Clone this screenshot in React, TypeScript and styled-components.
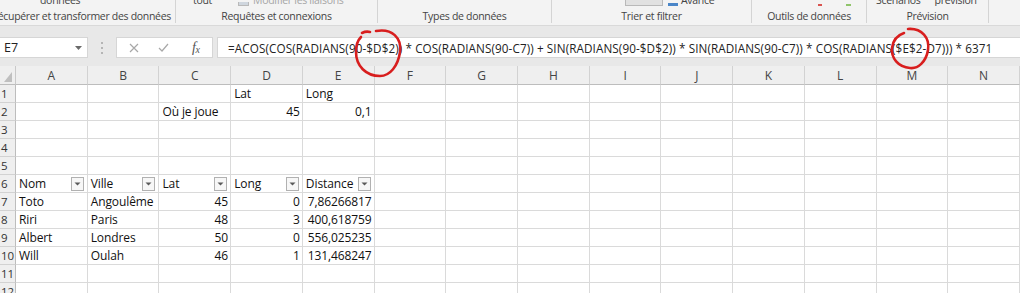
import React from 'react';
import styled, { createGlobalStyle } from 'styled-components';

const UI_FONT = `"Open Sans", "Noto Sans", "Liberation Sans", sans-serif`;

const GlobalStyle = createGlobalStyle`
  html, body { margin: 0; padding: 0; background: #ffffff; }
  body { width: 1020px; height: 293px; overflow: hidden; }
  #root { width: 1020px; height: 293px; }
`;

const Page = styled.div`
  position: relative;
  width: 1020px;
  height: 293px;
  overflow: hidden;
  display: flex;
  flex-direction: column;
  font-family: ${UI_FONT};
  background: #ffffff;
`;

/* ---------- Ribbon ---------- */
const Ribbon = styled.div`
  flex: none;
  height: 26px;
  box-sizing: border-box;
  padding-bottom: 2px;
  display: flex;
  background: #f3f3f3;
  border-bottom: 1px solid #d9d9d9;
`;

const Group = styled.div<{ $w?: number; $last?: boolean }>`
  flex: ${(p) => (p.$w ? 'none' : '1')};
  width: ${(p) => (p.$w ? `${p.$w}px` : 'auto')};
  box-sizing: border-box;
  border-right: ${(p) => (p.$last ? 'none' : '1px solid #d4d4d4')};
  display: flex;
  flex-direction: column;
  overflow: hidden;
`;

const TopRow = styled.div<{ $pad: number }>`
  height: 6px;
  overflow: hidden;
  display: flex;
  align-items: flex-end;
  padding-left: ${(p) => p.$pad}px;
`;

const TopText = styled.span<{ $ml?: number; $dim?: boolean }>`
  flex: none;
  margin-left: ${(p) => p.$ml ?? 0}px;
  font-size: 10.5px;
  letter-spacing: -0.3px;
  line-height: 13px;
  margin-bottom: -1px;
  color: ${(p) => (p.$dim ? '#a6a6a6' : '#444444')};
  white-space: nowrap;
`;

const TopBox = styled.span<{ $ml?: number; $w: number; $color: string; $h: number; $border?: boolean }>`
  flex: none;
  margin-left: ${(p) => p.$ml ?? 0}px;
  width: ${(p) => p.$w}px;
  height: ${(p) => p.$h}px;
  background: ${(p) => p.$color};
  border: ${(p) => (p.$border ? '1px solid #b9b9b9' : 'none')};
  border-top: none;
  box-sizing: border-box;
`;

const GroupLabel = styled.div<{ $align?: 'center' | 'right' }>`
  flex: 1;
  display: flex;
  align-items: center;
  justify-content: ${(p) => (p.$align === 'right' ? 'flex-end' : 'center')};
  padding-right: ${(p) => (p.$align === 'right' ? '4px' : '0')};
  padding-top: 2px;
  font-size: 10.5px;
  letter-spacing: -0.3px;
  color: #444444;
  white-space: nowrap;
  overflow: hidden;
`;

/* ---------- Formula bar ---------- */
const FormulaStrip = styled.div`
  flex: none;
  height: 40px;
  box-sizing: border-box;
  padding: 11px 0 8px 0;
  display: flex;
  background: #e8e8e8;
`;

const NameBox = styled.div`
  flex: none;
  width: 88px;
  box-sizing: border-box;
  display: flex;
  align-items: center;
  justify-content: space-between;
  padding: 0 5px 0 4px;
  background: #ffffff;
  border: 1px solid #d6d6d6;
  border-left: none;
  font-size: 12.5px;
  color: #222222;
`;

const Grip = styled.div`
  flex: none;
  width: 28px;
  display: flex;
  align-items: center;
  justify-content: center;
`;

const FxBox = styled.div`
  flex: none;
  width: 97px;
  margin-right: 4px;
  box-sizing: border-box;
  display: flex;
  align-items: center;
  padding-left: 12px;
  background: #ffffff;
  border: 1px solid #d6d6d6;
`;

const ToolIcon = styled.span<{ $ml?: number }>`
  flex: none;
  display: flex;
  align-items: center;
  margin-left: ${(p) => p.$ml ?? 0}px;
`;

const FxLabel = styled.span`
  flex: none;
  margin-left: 23px;
  font-family: "Liberation Serif", "DejaVu Serif", serif;
  font-style: italic;
  font-size: 14px;
  color: #555555;
  letter-spacing: -0.5px;
  & small {
    font-size: 10px;
    position: relative;
    top: 1px;
  }
`;

const FormulaInput = styled.div`
  flex: 1;
  display: flex;
  align-items: center;
  padding-left: 10px;
  background: #ffffff;
  border: 1px solid #d6d6d6;
  border-right: none;
  font-size: 11.7px;
  letter-spacing: 0.1px;
  color: #222222;
  white-space: nowrap;
  overflow: hidden;
`;

/* ---------- Sheet ---------- */
const Sheet = styled.div`
  flex: none;
  display: grid;
  grid-template-columns: 16px repeat(14, 1fr);
  grid-template-rows: 19px;
  grid-auto-rows: 18px;
  background: #ffffff;
`;

const HeaderBase = styled.div`
  box-sizing: border-box;
  background: #efefef;
  color: #444444;
  font-size: 12px;
  display: flex;
  align-items: center;
  overflow: hidden;
`;

const Corner = styled(HeaderBase)`
  border-right: 1px solid #c9c9c9;
  border-bottom: 1px solid #bdbdbd;
  justify-content: flex-end;
  align-items: flex-end;
  padding: 0 3px 2px 0;
`;

const ColHeader = styled(HeaderBase)`
  justify-content: center;
  border-right: 1px solid #d2d2d2;
  border-bottom: 1px solid #bdbdbd;
`;

const RowHeader = styled(HeaderBase)`
  border-right: 1px solid #bdbdbd;
  border-bottom: 1px solid #d2d2d2;
  padding-left: 1px;
  align-items: flex-end;
  font-size: 11.5px;
  line-height: 16px;
  color: #333333;
`;

const Cell = styled.div<{ $align?: 'left' | 'right' }>`
  box-sizing: border-box;
  border-right: 1px solid #dadada;
  border-bottom: 1px solid #dadada;
  display: flex;
  align-items: flex-end;
  justify-content: ${(p) => (p.$align === 'right' ? 'flex-end' : 'space-between')};
  padding: 0 ${(p) => (p.$align === 'right' ? '2px' : '3px')} 0 3px;
  font-size: 12px;
  line-height: 16px;
  letter-spacing: -0.1px;
  color: #111111;
  white-space: nowrap;
  overflow: visible;
`;

const FilterButton = styled.span`
  flex: none;
  align-self: center;
  width: 13px;
  height: 14px;
  box-sizing: border-box;
  border: 1px solid #b1b1b1;
  background: #f7f7f7;
  display: flex;
  align-items: center;
  justify-content: center;
`;

const Overlay = styled.svg`
  position: absolute;
  left: 0;
  top: 0;
  width: 1020px;
  height: 293px;
  pointer-events: none;
`;

const COLS = ['A', 'B', 'C', 'D', 'E', 'F', 'G', 'H', 'I', 'J', 'K', 'L', 'M', 'N'];

type CellData = { v: string; r?: boolean; f?: boolean };

const DATA: Record<number, Record<string, CellData>> = {
  1: { D: { v: 'Lat' }, E: { v: 'Long' } },
  2: { C: { v: 'Où je joue' }, D: { v: '45', r: true }, E: { v: '0,1', r: true } },
  6: {
    A: { v: 'Nom', f: true },
    B: { v: 'Ville', f: true },
    C: { v: 'Lat', f: true },
    D: { v: 'Long', f: true },
    E: { v: 'Distance', f: true },
  },
  7: { A: { v: 'Toto' }, B: { v: 'Angoulême' }, C: { v: '45', r: true }, D: { v: '0', r: true }, E: { v: '7,86266817', r: true } },
  8: { A: { v: 'Riri' }, B: { v: 'Paris' }, C: { v: '48', r: true }, D: { v: '3', r: true }, E: { v: '400,618759', r: true } },
  9: { A: { v: 'Albert' }, B: { v: 'Londres' }, C: { v: '50', r: true }, D: { v: '0', r: true }, E: { v: '556,025235', r: true } },
  10: { A: { v: 'Will' }, B: { v: 'Oulah' }, C: { v: '46', r: true }, D: { v: '1', r: true }, E: { v: '131,468247', r: true } },
};

const FORMULA =
  '=ACOS(COS(RADIANS(90-$D$2)) * COS(RADIANS(90-C7)) + SIN(RADIANS(90-$D$2)) * SIN(RADIANS(90-C7)) * COS(RADIANS($E$2-D7))) * 6371';

const FilterArrow = () => (
  <svg width="7" height="4" viewBox="0 0 7 4">
    <path d="M0.5 0.5 L6.5 0.5 L3.5 3.5 Z" fill="#5a5a5a" />
  </svg>
);

export default function App() {
  const rows = Array.from({ length: 12 }, (_, i) => i + 1);
  return (
    <>
      <GlobalStyle />
      <Page>
        <Ribbon>
          <Group $w={176}>
            <TopRow $pad={40}>
              <TopText>données</TopText>
            </TopRow>
            <GroupLabel $align="right">Récupérer et transformer des données</GroupLabel>
          </Group>
          <Group $w={202}>
            <TopRow $pad={17}>
              <TopText>tout</TopText>
              <TopBox $ml={26} $w={11} $h={4} $color="#cfd6de" $border />
              <TopText $ml={4} $dim>
                Modifier les liaisons
              </TopText>
            </TopRow>
            <GroupLabel>Requêtes et connexions</GroupLabel>
          </Group>
          <Group $w={174}>
            <TopRow $pad={0} />
            <GroupLabel>Types de données</GroupLabel>
          </Group>
          <Group $w={200}>
            <TopRow $pad={73}>
              <TopBox $w={38} $h={6} $color="#e1e1e1" $border />
              <TopBox $ml={5} $w={10} $h={3} $color="#4a86c8" />
              <TopText $ml={3}>Avancé</TopText>
            </TopRow>
            <GroupLabel>Trier et filtrer</GroupLabel>
          </Group>
          <Group $w={115}>
            <TopRow $pad={66}>
              <TopBox $w={4} $h={2} $color="#d9534f" />
              <TopBox $ml={24} $w={5} $h={2} $color="#8fc46a" />
            </TopRow>
            <GroupLabel>Outils de données</GroupLabel>
          </Group>
          <Group $w={122}>
            <TopRow $pad={9}>
              <TopText>Scénarios</TopText>
              <TopText $ml={14}>prévision</TopText>
            </TopRow>
            <GroupLabel>Prévision</GroupLabel>
          </Group>
          <Group $last>
            <TopRow $pad={0} />
            <GroupLabel />
          </Group>
        </Ribbon>

        <FormulaStrip>
          <NameBox>
            <span>E7</span>
            <svg width="7" height="4" viewBox="0 0 7 4">
              <path d="M0 0 L7 0 L3.5 4 Z" fill="#6a6a6a" />
            </svg>
          </NameBox>
          <Grip>
            <svg width="2" height="12" viewBox="0 0 2 12">
              <rect x="0" y="0" width="2" height="2" fill="#b5b5b5" />
              <rect x="0" y="5" width="2" height="2" fill="#b5b5b5" />
              <rect x="0" y="10" width="2" height="2" fill="#b5b5b5" />
            </svg>
          </Grip>
          <FxBox>
            <ToolIcon>
              <svg width="10" height="10" viewBox="0 0 10 10">
                <path d="M1 1 L9 9 M9 1 L1 9" stroke="#a8a8a8" strokeWidth="1.2" fill="none" />
              </svg>
            </ToolIcon>
            <ToolIcon $ml={19}>
              <svg width="11" height="9" viewBox="0 0 11 9">
                <path d="M1 5 L4 8 L10 1" stroke="#a8a8a8" strokeWidth="1.2" fill="none" />
              </svg>
            </ToolIcon>
            <FxLabel>
              f<small>x</small>
            </FxLabel>
          </FxBox>
          <FormulaInput>{FORMULA}</FormulaInput>
        </FormulaStrip>

        <Sheet>
          <Corner>
            <svg width="8" height="10" viewBox="0 0 8 10">
              <path d="M8 0 L8 10 L0 10 Z" fill="#bfbfbf" />
            </svg>
          </Corner>
          {COLS.map((c) => (
            <ColHeader key={c}>{c}</ColHeader>
          ))}
          {rows.map((r) => (
            <React.Fragment key={r}>
              <RowHeader>{r}</RowHeader>
              {COLS.map((c) => {
                const d = DATA[r]?.[c];
                return (
                  <Cell key={c} $align={d?.r ? 'right' : 'left'}>
                    {d ? <span>{d.v}</span> : null}
                    {d?.f ? (
                      <FilterButton>
                        <FilterArrow />
                      </FilterButton>
                    ) : null}
                  </Cell>
                );
              })}
            </React.Fragment>
          ))}
        </Sheet>

        <Overlay viewBox="0 0 1020 293">
          <g stroke="#d81e1e" strokeWidth="2.6" fill="none" strokeLinecap="round">
            <path d="M362 33 Q366 31 370 32" />
            <path d="M376 31 C392 28 402 38 400 52 C398 66 390 76 380 76 C366 76 356 66 356 52 C356 44 358 40 361 37" />
            <path d="M908 29 C922 28 930 38 928 50 C926 62 918 69 910 68 C898 67 891 58 892 48 C893 40 898 35 904 33" />
          </g>
        </Overlay>
      </Page>
    </>
  );
}
